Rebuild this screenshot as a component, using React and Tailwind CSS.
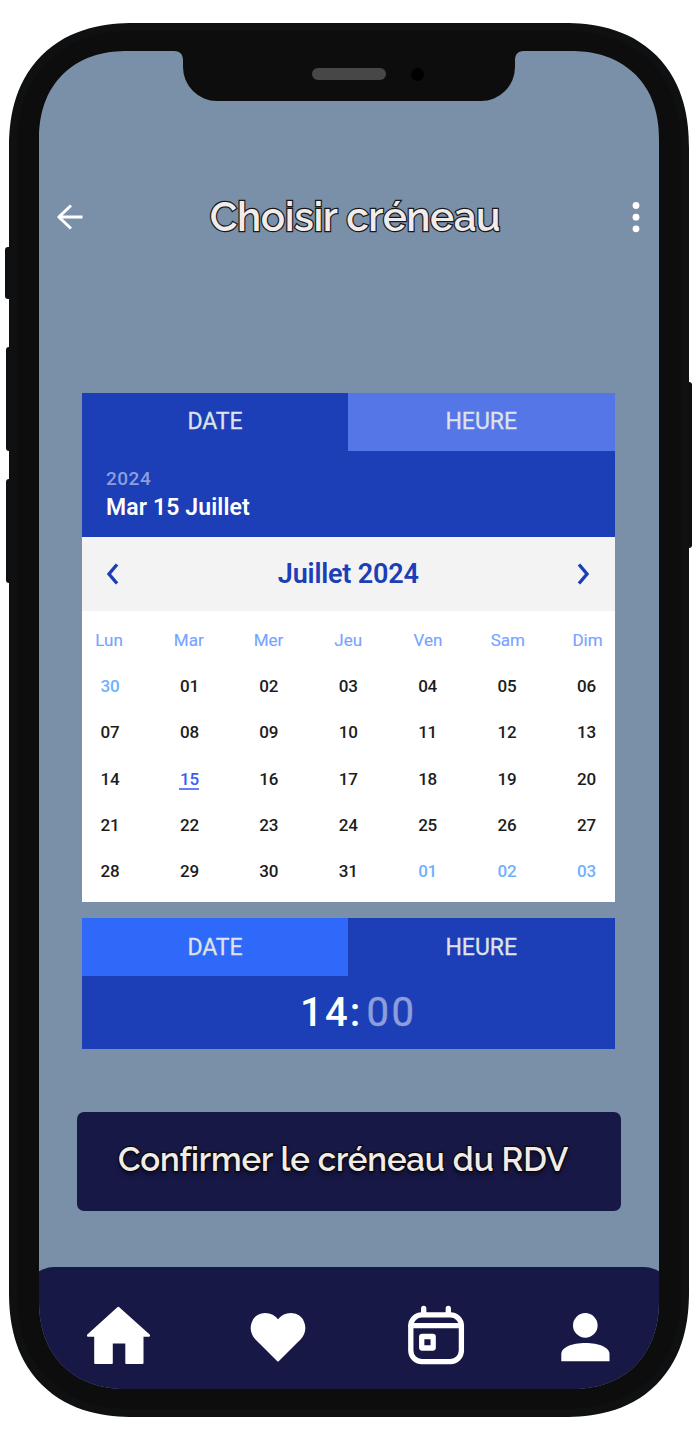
const WEEKDAYS = ["Lun", "Mar", "Mer", "Jeu", "Ven", "Sam", "Dim"];

const WEEKS = [
  ["30", "01", "02", "03", "04", "05", "06"],
  ["07", "08", "09", "10", "11", "12", "13"],
  ["14", "15", "16", "17", "18", "19", "20"],
  ["21", "22", "23", "24", "25", "26", "27"],
  ["28", "29", "30", "31", "01", "02", "03"],
];

function isOutside(week, day) {
  return (week === 0 && Number(day) > 20) || (week === 4 && Number(day) < 10);
}

function dayClass(week, day) {
  if (isOutside(week, day)) return "text-[#6fb0ff]";
  if (day === "15") return "text-[#3a5cf5]";
  return "text-[#1c1c1c]";
}

function Notch() {
  return (
    <div className="absolute left-[144px] top-0 h-[50px] w-[332px] rounded-b-[34px] bg-[#0d0d0d]">
      <svg className="absolute -left-[9px] top-0" width="10" height="10" viewBox="0 0 10 10">
        <path d="M0 0H10V10H9C9 4 7 0.3 0 0Z" fill="#0d0d0d" />
      </svg>
      <svg className="absolute -right-[9px] top-0" width="10" height="10" viewBox="0 0 10 10">
        <path d="M10 0H0V10H1C1 4 3 0.3 10 0Z" fill="#0d0d0d" />
      </svg>
      <div className="absolute left-[129px] top-[17px] h-3 w-[74px] rounded-full bg-[#474747]" />
      <div className="absolute left-[228px] top-[17px] size-[13px] rounded-full bg-black" />
    </div>
  );
}

function Header() {
  return (
    <header className="flex h-[60px] items-center justify-between pl-[17px] pr-[19px]">
      <svg width="28" height="28" viewBox="0 0 28 28" fill="none" stroke="#fff" strokeWidth="3" strokeLinejoin="round">
        <path d="M26.5 14H3M15 2.5L2.8 14L15 25.5" />
      </svg>
      <h1 className="w-[330px] whitespace-nowrap text-center font-[Raleway,Lato,sans-serif] text-[40.5px] font-semibold leading-[60px] tracking-[-0.45px] text-[#f1ecea] [-webkit-text-stroke:2.5px_#17191c] [paint-order:stroke_fill]">
        Choisir créneau
      </h1>
      <svg width="14" height="32" viewBox="0 0 14 32" fill="#fff">
        <circle cx="10" cy="4.5" r="3.4" />
        <circle cx="10" cy="16.2" r="3.4" />
        <circle cx="10" cy="27.8" r="3.4" />
      </svg>
    </header>
  );
}

function Calendar() {
  return (
    <section className="flex h-[509.5px] w-[532.5px] flex-col bg-white">
      <div className="flex h-[58px] bg-[#1c3eb6] text-center text-[23px] leading-[57px] text-[#dfe2e8] [-webkit-text-stroke:0.3px_#dfe2e8]">
        <div className="w-[266px]">DATE</div>
        <div className="flex-1 bg-[#5476e6]">HEURE</div>
      </div>
      <div className="h-[86px] bg-[#1c3eb6] pl-6 pt-[14px] font-medium">
        <p className="text-[19px] leading-7 tracking-[0.5px] text-[#8e9edb]">2024</p>
        <p className="text-[23px] font-semibold leading-[29px] tracking-[0.12px] text-white">Mar 15 Juillet</p>
      </div>
      <div className="flex h-[74.5px] items-center justify-between bg-[#f3f3f3] px-6 text-[#1c3eb6]">
        <svg width="13" height="22" viewBox="0 0 13 22" fill="none" stroke="currentColor" strokeWidth="3.4">
          <path d="M11 1.5L3 11L11 20.5" />
        </svg>
        <h2 className="text-[27px] font-semibold tracking-[-0.2px]">Juillet 2024</h2>
        <svg width="13" height="22" viewBox="0 0 13 22" fill="none" stroke="currentColor" strokeWidth="3.4">
          <path d="M2 1.5L10 11L2 20.5" />
        </svg>
      </div>
      <div className="flex h-[52px] justify-between pt-[18px] text-center text-[17px] leading-[22px] text-[#78a3ff] [-webkit-text-stroke:0.15px_#78a3ff]">
        {WEEKDAYS.map((d) => (
          <div key={d} className="w-[54px]">{d}</div>
        ))}
      </div>
      {WEEKS.map((week, w) => (
        <div key={w} className="flex h-[46.25px] justify-between text-center text-[17px] font-medium leading-[46px] tracking-[-0.2px]">
          {week.map((d) => (
            <div key={d} className="flex w-14 justify-center">
              <span className={dayClass(w, d)}>
                {d}
                {d === "15" && <span className="-mt-[14px] block h-[2px] w-5 bg-[#3a5cf5]/80" />}
              </span>
            </div>
          ))}
        </div>
      ))}
    </section>
  );
}

function TimePicker() {
  return (
    <section className="mt-4 h-[131px] w-[532.5px] bg-[#1c3eb6]">
      <div className="flex h-[58px] text-center text-[23px] leading-[59px] text-[#dfe2e8] [-webkit-text-stroke:0.3px_#dfe2e8]">
        <div className="h-[58px] w-[266px] bg-[#2f69fa]">DATE</div>
        <div className="h-[58px] flex-1">HEURE</div>
      </div>
      <div className="flex justify-center pl-5 text-[40px] leading-[73px] tracking-[2.5px]">
        <span className="font-medium tracking-[2.2px] text-white">14:</span>
        <span className="pl-1 text-[#8e9edb] [-webkit-text-stroke:0.5px_#8e9edb]">00</span>
      </div>
    </section>
  );
}

function NavBar() {
  return (
    <nav className="-mx-[13px] flex h-[122px] shrink-0 rounded-t-[28px] bg-[#181847] pl-[60px] pt-[38px]">
      <svg width="64" height="60" viewBox="0 0 64 60" fill="#fff" stroke="#fff" strokeWidth="2" strokeLinejoin="round">
        <path d="M32.3 2.8L63 30.2V30.7H56.5V58H40.3V37.5H25.8V58H9.2V30.7H2V30.2Z" />
      </svg>
      <svg className="ml-[98.5px] mt-[7px]" width="58" height="52" viewBox="0 0 58 52" fill="#fff" stroke="#fff" strokeWidth="2" strokeLinejoin="round">
        <path d="M29 48.5L7.2 26.7C-1 18 2.5 2.5 16 2C21.5 2 26 4.7 29 8.8C32 4.7 36.5 2 42 2C55.5 2.5 59 18 50.8 26.7Z" />
      </svg>
      <svg className="ml-[100px]" width="58" height="60" viewBox="0 0 58 60" fill="none" stroke="#fff" strokeWidth="5.3" strokeLinecap="round">
        <rect x="3.8" y="9.8" width="50.6" height="46.8" rx="11" />
        <path d="M16.7 3.5V9M41.3 3.5V9M4 20.7H54" />
        <rect x="14.7" y="31.5" width="11.5" height="11.5" rx="0.5" />
      </svg>
      <svg className="ml-[95.5px] mt-[7px]" width="50" height="52" viewBox="0 0 50 52" fill="#fff">
        <circle cx="25.3" cy="13.4" r="12.3" />
        <path d="M1.3 49.3V42C1.3 35.5 12 31 25.4 31C38.8 31 49.5 35.5 49.5 42V49.3Z" />
      </svg>
    </nav>
  );
}

export default function App() {
  return (
    <div className="relative h-[1440px] w-[696px] overflow-hidden bg-white pl-[9px] pt-[23px] font-[Roboto,sans-serif]">
      <div className="absolute left-[5px] top-[247px] h-[52px] w-2 rounded-l-[3px] bg-[#0d0f10]" />
      <div className="absolute left-[6px] top-[347px] h-[104px] w-2 rounded-l-[3px] bg-[#0d0f10]" />
      <div className="absolute left-[6px] top-[479px] h-[104px] w-2 rounded-l-[3px] bg-[#0d0f10]" />
      <div className="absolute left-[684px] top-[382px] h-[166px] w-2 rounded-r-[3px] bg-[#0d0f10]" />
      <div className="relative h-[1394px] w-[680px] rounded-[125px] border-[8px] border-[#0e1011] bg-[#0d0d0d] px-[22px] py-5 [corner-shape:superellipse(1.2)]">
        <main className="relative flex h-[1338px] w-[620px] flex-col overflow-hidden rounded-[88px] bg-[#7a90a8] pt-[136px] [corner-shape:superellipse(1.15)]">
          <Notch />
          <Header />
          <div className="ml-[43px] mt-[145.5px]">
            <Calendar />
            <TimePicker />
          </div>
          <button className="ml-[38px] mt-[63px] h-[99px] w-[544px] shrink-0 whitespace-nowrap rounded-[7px] bg-[#181847] pb-[3px] pr-3 text-center font-[Raleway,Lato,sans-serif] text-[33px] font-semibold leading-[94px] tracking-[-0.15px] text-[#f1ecea] [-webkit-text-stroke:2.5px_#0b0b0f] [paint-order:stroke_fill] [text-shadow:0_4px_4px_rgba(0,0,0,0.5)]">
            Confirmer le créneau du RDV
          </button>
          <div className="flex-1" />
          <NavBar />
        </main>
      </div>
    </div>
  );
}
